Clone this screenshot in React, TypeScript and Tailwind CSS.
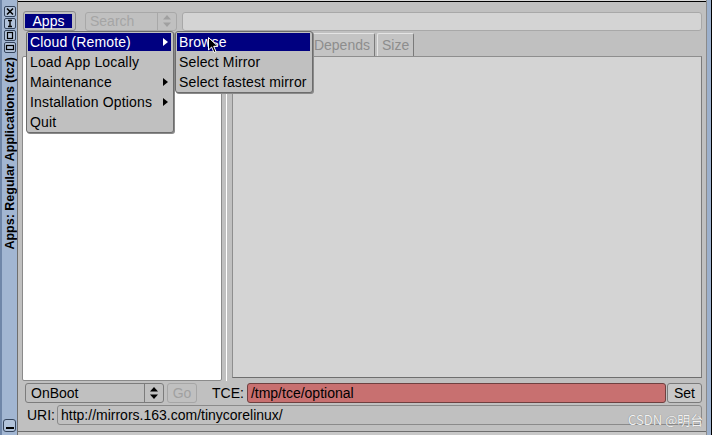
import React from 'react';

const Tri = ({ white }: { white?: boolean }) => (
  <svg width="5" height="8" viewBox="0 0 5 8">
    <polygon points="0,0 5,4 0,8" fill={white ? '#fff' : '#000'} />
  </svg>
);

const Spin = ({ color }: { color: string }) => (
  <svg width="8" height="12" viewBox="0 0 8 12">
    <polygon points="4,0 8,4.5 0,4.5" fill={color} />
    <polygon points="0,7.5 8,7.5 4,12" fill={color} />
  </svg>
);

const MenuItem = ({ label, active, sub }: { label: string; active?: boolean; sub?: boolean }) => (
  <div className="h-[20px] py-px">
    <div
      className={`h-[18px] flex items-center pl-[2px] pr-[3px] ${
        active ? 'bg-[#000080] text-white' : 'text-black'
      }`}
    >
      <span className="flex-1 leading-[18px] whitespace-nowrap tracking-[0.15px]">{label}</span>
      {sub && <Tri white={active} />}
    </div>
  </div>
);

const WinButton = ({ children }: { children: React.ReactNode }) => (
  <div className="w-[12px] h-[11px] border border-[#34445c] rounded-[2px] bg-[#b2c3da] flex items-center justify-center">
    <svg width="10" height="9" viewBox="0 0 10 9" fill="none" stroke="#000">
      {children}
    </svg>
  </div>
);

const Tab = ({ label }: { label: string }) => (
  <div className="h-[23px] px-[4px] border-t border-l border-[#e4e4e4] border-r border-r-[#7a7a7a] rounded-t-[2px] bg-[#c4c4c4] text-[#8d8d8d] leading-[22px] whitespace-nowrap">
    {label}
  </div>
);

export default function App() {
  return (
    <div className="relative w-[712px] h-[435px] flex bg-[#c0c0c0] overflow-hidden font-['Liberation_Sans',Arial,sans-serif] text-[14px] text-black">
      {/* vertical title bar */}
      <div className="w-[18px] h-full flex flex-col items-center border-l-2 border-[#6f86a8] border-r border-r-[#6e6e6e] bg-[#a2b6d2]">
        <div className="mt-[6px] flex flex-col gap-px">
          <WinButton>
            <path d="M2 1.5 L8 7.5 M8 1.5 L2 7.5" strokeWidth="1.6" />
          </WinButton>
          <WinButton>
            <path d="M3 1.5 H7 M5 1.5 V7.5 M3 7.5 H7" strokeWidth="1.4" />
          </WinButton>
          <WinButton>
            <rect x="2.5" y="1.5" width="5" height="6" strokeWidth="1.2" />
          </WinButton>
          <WinButton>
            <rect x="1.5" y="2.5" width="7" height="4" strokeWidth="1.2" />
          </WinButton>
        </div>
        <div className="mt-[4px] [writing-mode:vertical-rl] rotate-180 font-bold text-[12.5px] leading-[14px] whitespace-nowrap">
          Apps: Regular Applications (tcz)
        </div>
        <div className="mt-auto mb-[3px]">
          <div className="w-[13px] h-[13px] border border-[#34445c] rounded-[3px] bg-[#b2c3da] flex items-end justify-center pb-[2px]">
            <div className="w-[8px] h-[2px] bg-black" />
          </div>
        </div>
      </div>

      {/* main client area */}
      <div className="flex-1 flex flex-col">
        <div className="h-px bg-[#d8d8d8]" />
        <div className="h-px bg-black" />

        <div className="pl-[4px] pr-[4px] flex-1 flex flex-col">
          {/* top row */}
          <div className="mt-[9px] h-[20px] flex items-center">
            <div className="ml-px w-[53px] h-[20px] rounded-[3px] border border-[#8c8c8c] pt-[2px] pl-px">
              <div className="w-[47px] h-[14px] bg-[#000080] text-white leading-[14px] text-center">Apps</div>
            </div>
            <div className="ml-[9px] w-[92px] h-[19px] rounded-[3px] border border-[#a8a8a8] flex">
              <div className="flex-1 pl-[4px] leading-[17px] text-[#a5a5a5]">Search</div>
              <div className="w-[19px] border-l border-[#a8a8a8] flex items-center justify-center">
                <Spin color="#a0a0a0" />
              </div>
            </div>
            <div className="ml-[5px] flex-1 h-[19px] rounded-[3px] border border-[#a8a8a8] bg-[#d4d4d4]" />
          </div>

          {/* middle */}
          <div className="mt-[2px] h-[348px] flex">
            <div className="w-[200px] flex flex-col">
              <div className="h-[23px]" />
              <div className="flex-1 bg-white border border-[#8a8a8a] rounded-[2px]" />
            </div>
            <div className="ml-[4px] flex-1 flex flex-col">
              <div className="h-[23px] pl-[6px] flex items-end gap-[2px]">
                <Tab label="Info" />
                <Tab label="Files" />
                <Tab label="Depends" />
                <Tab label="Size" />
              </div>
              <div className="flex-1 flex border-l border-white pl-[5px] pb-[3px]">
                <div className="flex-1 bg-[#d4d4d4] border border-[#8e8e8e] border-b-[#6e6e6e] border-r-[#7a7a7a]" />
              </div>
            </div>
          </div>

          {/* bottom row 1 */}
          <div className="mt-[2px] h-[20px] flex items-center">
            <div className="ml-[3px] w-[139px] h-[20px] rounded-[3px] border border-[#7c7c7c] flex">
              <div className="flex-1 pl-[5px] leading-[18px]">OnBoot</div>
              <div className="w-[19px] border-l border-[#7c7c7c] flex items-center justify-center">
                <Spin color="#000" />
              </div>
            </div>
            <div className="ml-[3px] w-[30px] h-[20px] rounded-[3px] border border-[#a6a6a6] text-[#a0a0a0] text-center leading-[18px]">
              Go
            </div>
            <div className="ml-[15px] leading-[18px]">TCE:</div>
            <div className="ml-[3px] flex-1 h-[20px] rounded-[3px] border border-[#6e4040] bg-[#c87070] pl-[3px] leading-[18px]">
              /tmp/tce/optional
            </div>
            <div className="ml-px w-[35px] h-[20px] rounded-[3px] border border-[#7a7a7a] bg-[#c8c8c8] text-center leading-[18px]">
              Set
            </div>
          </div>

          {/* bottom row 2 */}
          <div className="mt-[2px] h-[20px] flex items-center">
            <div className="w-[33px] text-right leading-[18px]">URI:</div>
            <div className="ml-[2px] flex-1 h-[20px] rounded-[3px] border border-[#8a8a8a] pl-[3px] leading-[18px]">
              http://mirrors.163.com/tinycorelinux/
            </div>
          </div>
          <div className="flex-1" />
        </div>

        <div className="h-px bg-[#6e6e6e]" />
        <div className="h-[3px] bg-[#c8c8c8]" />
      </div>

      {/* right frame edge */}
      <div className="w-[6px] h-full border-l border-[#8a8a8a] border-r border-r-black bg-[#9cb0cc]" />

      {/* Apps menu */}
      <div className="absolute left-[26px] top-[31px] w-[148px] border border-[#6c6c6c] rounded-[3px] bg-[#c0c0c0] pl-px pr-[2px] shadow-[1px_1px_0_#8a8a8a]">
        <MenuItem label="Cloud (Remote)" active sub />
        <MenuItem label="Load App Locally" />
        <MenuItem label="Maintenance" sub />
        <MenuItem label="Installation Options" sub />
        <MenuItem label="Quit" />
      </div>

      {/* submenu */}
      <div className="absolute left-[175px] top-[31px] w-[138px] border border-[#6c6c6c] rounded-[3px] bg-[#c0c0c0] pl-px pr-[2px] shadow-[1px_1px_0_#8a8a8a]">
        <MenuItem label="Browse" active />
        <MenuItem label="Select Mirror" />
        <MenuItem label="Select fastest mirror" />
      </div>

      {/* mouse pointer */}
      <svg className="absolute left-[208px] top-[37px]" width="11" height="17" viewBox="0 0 11 17">
        <path
          d="M0.5 0.5 L0.5 13 L3.6 10 L6 15.5 L8 14.6 L5.7 9.3 L9.8 9.3 Z"
          fill="#000"
          stroke="#fff"
          strokeWidth="1"
          strokeLinejoin="round"
        />
      </svg>

      {/* watermark */}
      <div className="absolute left-[628px] top-[412px] text-[13px] leading-[16px] text-[#f2f2f2] font-['Noto_Sans_CJK_SC',sans-serif] [text-shadow:0_0_1px_#6e6e6e] whitespace-nowrap">
        CSDN @明台
      </div>
    </div>
  );
}
